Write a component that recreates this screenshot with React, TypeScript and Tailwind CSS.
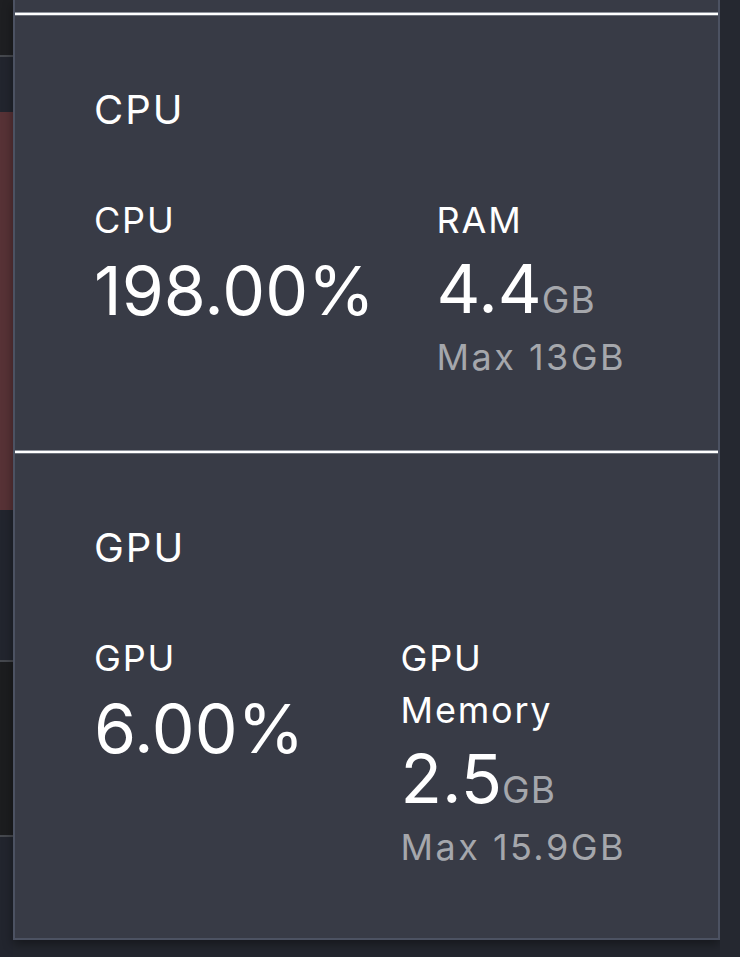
const stats = [
  {
    title: "CPU",
    left: { label: "CPU", value: "198.00%" },
    right: { label: "RAM", value: "4.4", unit: "GB", max: "Max 13GB" },
  },
  {
    title: "GPU",
    left: { label: "GPU", value: "6.00%" },
    right: { label: "GPU Memory", value: "2.5", unit: "GB", max: "Max 15.9GB" },
  },
];

function Divider() {
  return (
    <div className="flex flex-col shrink-0">
      <div className="h-px bg-[#8e939c]" />
      <div className="h-[2px] bg-white" />
      <div className="h-px bg-[#6b707a]" />
    </div>
  );
}

function Section({ stat, className }: { stat: (typeof stats)[number]; className?: string }) {
  return (
    <div className={`pl-[79px] pr-[92px] pt-[71px] ${className ?? ""}`}>
      <h2 className="text-[40px] leading-[46px] tracking-[0.05em] text-white">{stat.title}</h2>
      <div className="mt-[61px] flex justify-between">
        <div>
          <div className="text-[36px] leading-[52px] tracking-[0.05em] text-white">{stat.left.label}</div>
          <div className="mt-[9px] text-[68px] leading-[70px] text-white">{stat.left.value}</div>
        </div>
        <div>
          <div className="w-min text-[36px] leading-[52px] tracking-[0.05em] text-white">{stat.right.label}</div>
          <div className="mt-[7px] flex items-baseline">
            <span className="text-[68px] leading-[70px] text-white">{stat.right.value}</span>
            <span className="text-[37px] leading-[40px] tracking-[0.03em] text-[#a5a7ac]">{stat.right.unit}</span>
          </div>
          <div className="mt-[12px] text-[36px] leading-[44px] tracking-[0.068em] text-[#a5a7ac]">{stat.right.max}</div>
        </div>
      </div>
    </div>
  );
}

export default function App() {
  return (
    <div
      className="flex h-[957px] w-[740px] overflow-hidden bg-[#23262e]"
      style={{ fontFamily: "Inter, 'Noto Sans', sans-serif" }}
    >
      {/* strip of the window behind */}
      <div className="flex w-[13px] shrink-0 flex-col">
        <div className="h-[55px] bg-[#1e1f22]" />
        <div className="h-[2px] bg-[#45484e]" />
        <div className="h-[55px] bg-[#22252e]" />
        <div className="h-[398px] bg-[#573236]" />
        <div className="h-[150px] bg-[#22252e]" />
        <div className="h-[2px] bg-[#45484e]" />
        <div className="h-[173px] bg-[#1c1d1f]" />
        <div className="h-[2px] bg-[#45484e]" />
        <div className="flex-1 bg-[#22252e]" />
      </div>

      <div className="flex h-[940px] w-[707px] shrink-0 flex-col border-x-2 border-b-2 border-[#4c5262] bg-[#383b46] shadow-[0_4px_10px_rgba(0,0,0,0.4)]">
        <div className="h-[12px] shrink-0" />
        <Divider />
        <Section stat={stats[0]} className="h-[434px] shrink-0" />
        <Divider />
        <Section stat={stats[1]} className="flex-1" />
      </div>

      <div className="flex-1 bg-[#252830]" />
    </div>
  );
}
